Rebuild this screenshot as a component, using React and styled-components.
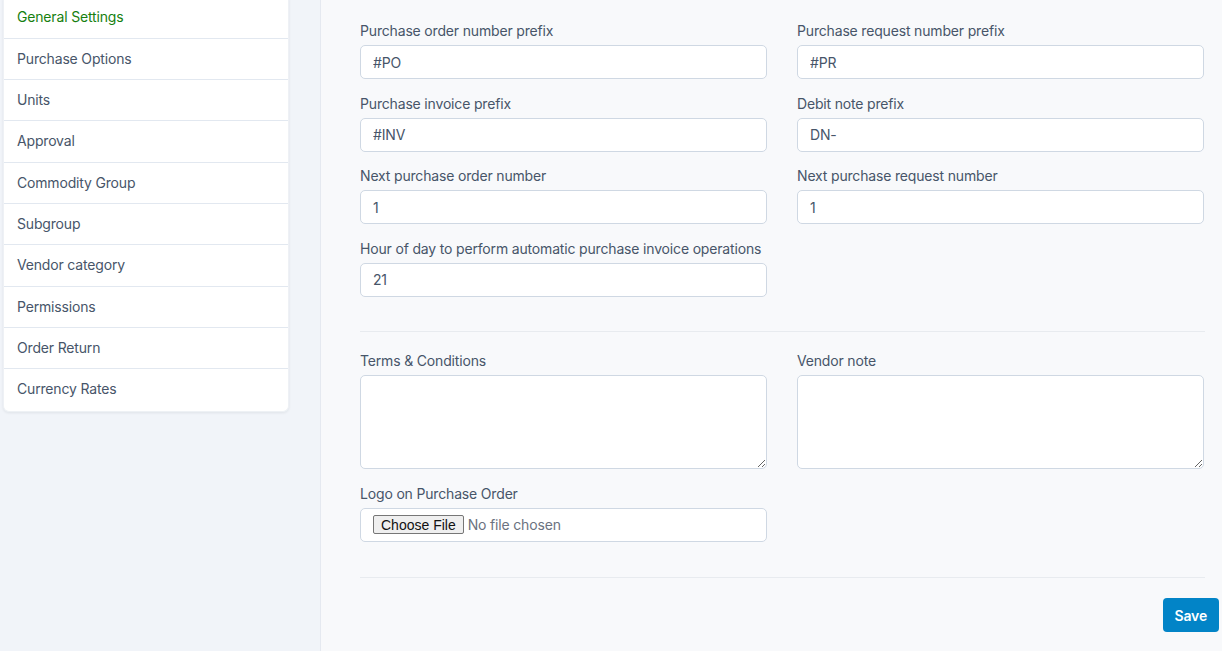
import React from "react";
import styled, { createGlobalStyle } from "styled-components";

const Global = createGlobalStyle`
  html, body { margin: 0; padding: 0; }
  body {
    font-family: Inter, "Noto Sans", "Liberation Sans", sans-serif;
    font-size: 14px;
    letter-spacing: -0.17px;
    color: #475569;
    background: #f8f9fb;
    overflow: hidden;
  }
  * { box-sizing: border-box; }
`;

const Page = styled.div`
  display: flex;
  width: 1222px;
  height: 651px;
  overflow: hidden;
`;

const Aside = styled.aside`
  width: 321px;
  flex-shrink: 0;
  background: #f1f4f9;
  border-right: 1px solid #e5e9f0;
  padding-left: 3px;
`;

const Menu = styled.ul`
  list-style: none;
  margin: -2.66px 0 0;
  padding: 0;
  width: 286px;
  background: #fff;
  border-radius: 0 0 6px 6px;
  box-shadow: 0 1px 3px rgba(15, 23, 42, 0.08);
  border: 1px solid #eef1f5;
  border-top: none;
`;

const MenuItem = styled.li`
  padding: 10px 13px;
  line-height: 20.33px;
  font-size: 14px;
  color: ${(p) => (p.$active ? "#16800f" : "#475569")};
  border-bottom: 1px solid ${(p) => (p.$last ? "transparent" : "#e2e8f0")};
  cursor: pointer;
`;

const Main = styled.main`
  flex: 1;
  padding: 21px 3px 0 39px;
`;

const Grid = styled.div`
  display: grid;
  grid-template-columns: 407px 407px;
  column-gap: 30px;
  width: 844px;
`;

const Field = styled.div`
  margin-bottom: 14.5px;
`;

const Label = styled.label`
  display: block;
  line-height: 20px;
  margin-bottom: 4px;
  font-size: 14px;
  color: #475569;
  white-space: nowrap;
`;

const Input = styled.input`
  display: block;
  width: 100%;
  height: 34px;
  padding: 6px 12px;
  border: 1px solid #cfd8e3;
  border-radius: 5px;
  background: #fff;
  font-family: inherit;
  font-size: 14px;
  letter-spacing: inherit;
  color: #475569;
  outline: none;
`;

const TextArea = styled.textarea`
  display: block;
  width: 100%;
  height: 94px;
  padding: 6px 12px;
  border: 1px solid #cfd8e3;
  border-radius: 5px;
  background: #fff;
  font-family: inherit;
  font-size: 14px;
  color: #475569;
  outline: none;
`;

const FileBox = styled.div`
  height: 34px;
  padding: 0 12px;
  display: flex;
  align-items: center;
  border: 1px solid #cfd8e3;
  border-radius: 5px;
  background: #fff;
`;

const FileInput = styled.input`
  font-family: Inter, "Noto Sans", sans-serif;
  font-size: 14px;
  letter-spacing: -0.17px;
  color: #6b7280;
  &::file-selector-button {
    font-family: "Liberation Sans", Arial, sans-serif;
    font-size: 14px;
    letter-spacing: 0;
    color: #111;
    background: #efefef;
    border: 1px solid #767676;
    border-radius: 2px;
    padding: 0 7px;
    height: 19px;
    margin-right: 4px;
  }
`;

const Divider = styled.hr`
  width: 845px;
  margin: ${(p) => p.$m};
  border: none;
  border-top: 1px solid #e8ebef;
`;

const Footer = styled.div`
  display: flex;
  justify-content: flex-end;
`;

const SaveButton = styled.button`
  height: 34px;
  padding: 0 12px;
  background: #0284c7;
  color: #fff;
  border: none;
  border-radius: 4px;
  font-family: inherit;
  font-size: 14px;
  letter-spacing: -0.17px;
  font-weight: 600;
  cursor: pointer;
`;

const items = [
  "General Settings",
  "Purchase Options",
  "Units",
  "Approval",
  "Commodity Group",
  "Subgroup",
  "Vendor category",
  "Permissions",
  "Order Return",
  "Currency Rates",
];

export default function App() {
  return (
    <>
      <Global />
      <Page>
        <Aside>
          <Menu>
            {items.map((t, i) => (
              <MenuItem key={t} $active={i === 0} $last={i === items.length - 1}>
                {t}
              </MenuItem>
            ))}
          </Menu>
        </Aside>
        <Main>
          <Grid>
            <Field>
              <Label>Purchase order number prefix</Label>
              <Input defaultValue="#PO" />
            </Field>
            <Field>
              <Label>Purchase request number prefix</Label>
              <Input defaultValue="#PR" />
            </Field>
            <Field>
              <Label>Purchase invoice prefix</Label>
              <Input defaultValue="#INV" />
            </Field>
            <Field>
              <Label>Debit note prefix</Label>
              <Input defaultValue="DN-" />
            </Field>
            <Field>
              <Label>Next purchase order number</Label>
              <Input defaultValue="1" />
            </Field>
            <Field>
              <Label>Next purchase request number</Label>
              <Input defaultValue="1" />
            </Field>
            <Field>
              <Label>Hour of day to perform automatic purchase invoice operations</Label>
              <Input defaultValue="21" />
            </Field>
          </Grid>
          <Divider $m="20px 0 19px" />
          <Grid>
            <Field>
              <Label>Terms &amp; Conditions</Label>
              <TextArea />
            </Field>
            <Field>
              <Label>Vendor note</Label>
              <TextArea />
            </Field>
            <Field>
              <Label>Logo on Purchase Order</Label>
              <FileBox>
                <FileInput type="file" />
              </FileBox>
            </Field>
          </Grid>
          <Divider $m="21px 0 20px" />
          <Footer>
            <SaveButton>Save</SaveButton>
          </Footer>
        </Main>
      </Page>
    </>
  );
}
